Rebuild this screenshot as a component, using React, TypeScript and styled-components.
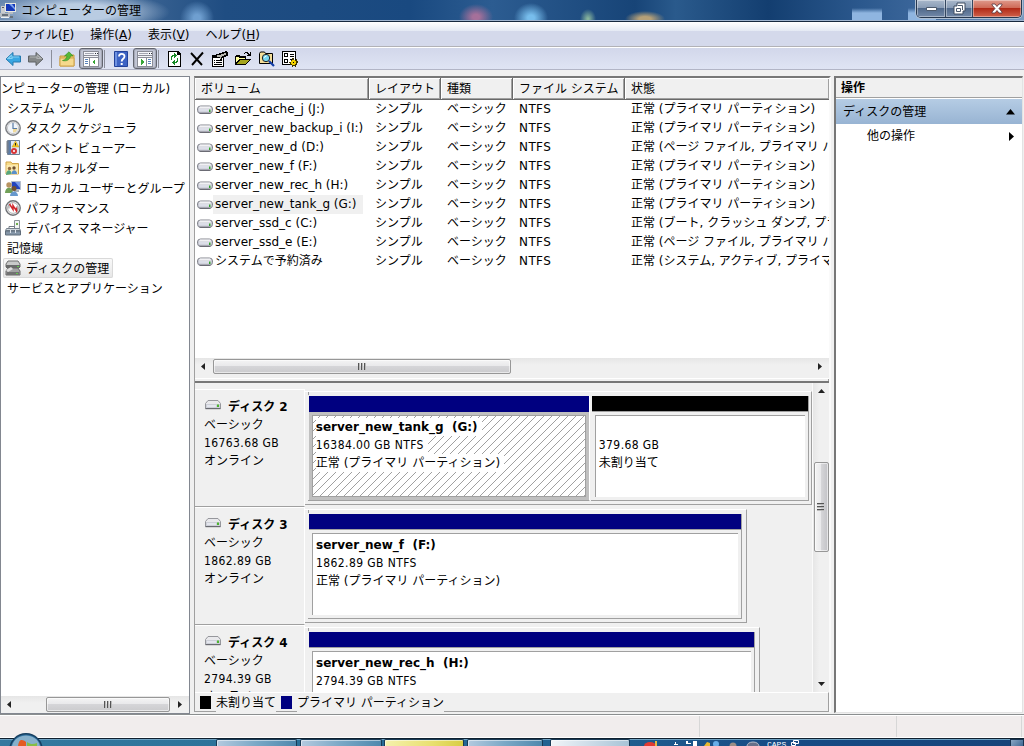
import type { ReactNode } from 'react';
import styled, { createGlobalStyle, css } from 'styled-components';

const volumes = [
  { name: 'server_cache_j (J:)', status: '正常 (プライマリ パーティション)' },
  { name: 'server_new_backup_i (I:)', status: '正常 (プライマリ パーティション)' },
  { name: 'server_new_d (D:)', status: '正常 (ページ ファイル, プライマリ パーティション)' },
  { name: 'server_new_f (F:)', status: '正常 (プライマリ パーティション)' },
  { name: 'server_new_rec_h (H:)', status: '正常 (プライマリ パーティション)' },
  { name: 'server_new_tank_g (G:)', status: '正常 (プライマリ パーティション)', selected: true },
  { name: 'server_ssd_c (C:)', status: '正常 (ブート, クラッシュ ダンプ, プライマリ パーティション)' },
  { name: 'server_ssd_e (E:)', status: '正常 (ページ ファイル, プライマリ パーティション)' },
  { name: 'システムで予約済み', status: '正常 (システム, アクティブ, プライマリ パーティション)' },
];

const disks = [
  {
    name: 'ディスク 2', size: '16763.68 GB', width: 504, parts: [
      { width: 280, title: 'server_new_tank_g  (G:)', size: '16384.00 GB NTFS', status: '正常 (プライマリ パーティション)', selected: true },
      { width: 216, title: '', size: '379.68 GB', status: '未割り当て', free: true },
    ],
  },
  {
    name: 'ディスク 3', size: '1862.89 GB', width: 438, parts: [
      { width: 432, title: 'server_new_f  (F:)', size: '1862.89 GB NTFS', status: '正常 (プライマリ パーティション)' },
    ],
  },
  {
    name: 'ディスク 4', size: '2794.39 GB', width: 451, parts: [
      { width: 445, title: 'server_new_rec_h  (H:)', size: '2794.39 GB NTFS', status: '正常 (プライマリ パーティション)' },
    ],
  },
] as {
  name: string; size: string; width: number;
  parts: { width: number; title: string; size: string; status: string; selected?: boolean; free?: boolean }[];
}[];

function Icon({ children, w = 16, h = 16, crisp }: { children: ReactNode; w?: number; h?: number; crisp?: boolean }) {
  return (
    <svg width={w} height={h} viewBox={`0 0 ${w} ${h}`} shapeRendering={crisp ? 'crispEdges' : undefined}>
      {children}
    </svg>
  );
}

const ComputerIcon = () => (
  <Icon>
    <path d="M5 0h11v9H5z" fill="#e8e8e0" />
    <path d="M6 1h9v7H6z" fill="#1438b8" />
    <path d="M9 1h3l3 4v2z" fill="#7ba2ee" />
    <path d="M1 3h4v7H1z" fill="#c9ccd0" />
    <path d="M2 4h2v1H2z" fill="#54585e" />
    <path d="M8 9h5v2H8zM0 10h10v4H0z" fill="#b7bcc2" />
    <path d="M2 11h6v2H2zM10 13h3v2h-3z" fill="#68727c" />
    <path d="M1 14h8v1H1z" fill="#eef2f5" />
  </Icon>
);

const ArrowIcon = ({ right }: { right?: boolean }) => (
  <Icon>
    <path
      d="M8 1.5 1 8l7 6.5V11h7.5V5H8z"
      transform={right ? 'translate(16 0) scale(-1 1)' : undefined}
      fill={right ? '#858889' : '#38a6e2'} stroke={right ? '#5e6264' : '#2579ae'} strokeLinejoin="round"
    />
    <path
      d="M7 4 3 7.5h4V6h7" transform={right ? 'translate(16 0) scale(-1 1)' : undefined}
      fill="none" stroke={right ? '#b0b3b4' : '#83d0f2'} strokeWidth="1.2"
    />
  </Icon>
);

const FolderUpIcon = () => (
  <Icon>
    <path d="M1 5h5l1-1h8v11H1z" fill="#efc567" stroke="#c89a3f" />
    <path d="M1 7h14v8H1z" fill="#f6d98d" stroke="#cfa24b" />
    <path d="M3.500 9.500C6 9 7.500 7.500 8 5H5.500L10 .8 14 5h-2.500c-.5 4-4 5.500-8 4.500z" fill="#57b836" stroke="#318b20" strokeWidth=".6" />
  </Icon>
);

const PaneIcon = ({ right }: { right?: boolean }) => (
  <Icon crisp>
    <path d="M0 0h16v16H0z" fill="#8b8d98" />
    <path d="M1 1h14v3H1zM1 5h14v1H1z" fill="#f4f5fa" />
    <path d="M2 2h9v1H2z" fill="#a4a6b2" />
    <path d="M12 2h1v1h-1zM14 2h1v1h-1z" fill="#30323c" />
    {right ? (
      <>
        <path d="M1 7h8v8H1zM10 7h5v8h-5z" fill="#fff" />
        <path d="M11 8h3v1h-3zM11 10h3v1h-3zM11 12h3v1h-3z" fill="#5b83bb" />
        <path d="m4 8 3 3-3 3z" fill="#37a537" />
      </>
    ) : (
      <>
        <path d="M1 7h5v8H1zM7 7h8v8H7z" fill="#fff" />
        <path d="M2 8h3v1H2zM2 10h3v1H2zM2 12h3v1H2z" fill="#5b83bb" />
        <path d="m12 8-3 3 3 3z" fill="#37a537" />
      </>
    )}
  </Icon>
);

const HelpIcon = () => (
  <Icon w={14}>
    <path d="M.5.5h13v15H.5z" fill="#3d63c4" stroke="#23429a" />
    <path d="M1 1h2v14H1z" fill="#6e91e0" />
    <path d="M5 5.5C5 2 10.500 2 10.500 5.300 10.500 8 7.700 7.500 7.700 10.500" fill="none" stroke="#fff" strokeWidth="1.8" />
    <path d="M6.700 12h2v2h-2z" fill="#fff" />
  </Icon>
);

const RefreshIcon = () => (
  <Icon w={13} crisp>
    <path d="M0 0h10l3 3v13H0z" fill="#000" />
    <path d="M1 1h8v3h3v11H1z" fill="#fff" />
    <path d="M6 2h1v1h1v1h1v1H8v1H7v1H6V5H5v1H4v3H3V5h1V4h2zM9 7h1v4H9v1H7v2H6v-1H5v-1H4v-1h1v-1h1V9h1v2h1v-1h1z" fill="#158a24" />
  </Icon>
);

const DeleteIcon = () => (
  <Icon w={14}>
    <path d="M1 2 12 14M13 1.500 2 14" fill="none" stroke="#000" strokeWidth="1.9" />
  </Icon>
);

const PropertiesIcon = () => (
  <Icon crisp>
    <path d="M0 4h12v12H0z" fill="#000" />
    <path d="M1 7h10v8H1z" fill="#fff" />
    <path d="M2 9h1v1H2zM4 9h6v1H4zM2 11h1v1H2zM4 11h6v1H4zM2 13h8v1H2z" fill="#000" />
    <path d="M4 3h3V2h3V1h3V0h2v1h1v4h-2v1h-2v1h-2v2H8V7H6V5H4z" fill="#000" />
    <path d="M5 4h4V3h3V2h2v2h-2v1h-2v1H9v2H8V6H5z" fill="#b8b8b0" />
  </Icon>
);

const OpenIcon = () => (
  <Icon crisp>
    <path d="M0 5h1V4h4v1h6v3h5v1h-1v1h-1v1h-1v1h-1v1h-1v1H0z" fill="#000" />
    <path d="M1 6h3v1h6v1H4v1H3v1H2v1H1z" fill="#ffff9c" />
    <path d="M5 9h9v1h-1v1h-1v1h-1v1H2v-1h1v-1h1v-1h1z" fill="#a5a51e" />
    <path d="M9 2h1V1h3v1h1v1h1V1h1v4h-4V4h1V3h-1V2h-2v1H9z" fill="#000" />
  </Icon>
);

const FindIcon = () => (
  <Icon>
    <path d="M.5 2.500 1.500 1h4l1 1.500h7v10H.5z" fill="#f5de98" stroke="#000" />
    <circle cx="7" cy="7" r="3.700" fill="#77d6f0" stroke="#222" />
    <path d="M5 6.500 7.500 5" stroke="#fff" />
    <path d="m10 10 5 5" stroke="#123da6" strokeWidth="2.200" />
  </Icon>
);

const SettingsIcon = () => (
  <Icon crisp>
    <path d="M0 0h14v14H0z" fill="#000" />
    <path d="M1 1h12v12H1z" fill="#fff" />
    <path d="M2 2h4v4H2zM8 3h4v1H8zM8 5h4v1H8zM2 8h4v4H2zM8 8h3v1H8z" fill="#000" />
    <path d="M3 3h2v2H3zM3 9h2v2H3z" fill="#fff" />
    <path d="M10 7h2v2h2V8h1v2h1v2h-1v2h-1v2h-1v-1h-2v1h-1v-2H8v-2H7v-1h2V9h1z" fill="#403700" />
    <path d="M10 9h3v1h1v3h-1v1h-3v-1H9v-3h1z" fill="#f1d000" />
    <path d="M11 11h1v1h-1z" fill="#000" />
  </Icon>
);

const DriveIcon = () => (
  <Icon h={9}>
    <rect x=".5" y="1" width="15" height="7.300" rx="3" fill="#c6c8d2" stroke="#85878f" />
    <path d="M3 1.500h10l1.500 2h-13z" fill="#f1f1f4" />
    <path d="M2 4h12v2.500H2z" fill="#dcdee8" />
    <path d="M2.500 8.300h11" stroke="#5f6068" />
    <path d="M12 4.500h1.500V7H12z" fill="#32a32b" />
  </Icon>
);

const DiskIcon = () => (
  <Icon h={10}>
    <path d="M3 .5h10l2.500 3v5h-15v-5z" fill="#e9e9ec" stroke="#96979c" />
    <path d="M1 4h14v4H1z" fill="#cdd0d8" />
    <path d="M2 5h9v2H2z" fill="#e4e6ee" />
    <path d="M.5 8.700h15" stroke="#5f6068" />
    <path d="M12 4.500h2V7h-2z" fill="#4cb52f" />
  </Icon>
);

const ClockIcon = () => (
  <Icon>
    <circle cx="8" cy="8" r="7.200" fill="#fafafa" stroke="#7d8085" strokeWidth="1.500" />
    <circle cx="8" cy="8" r="5.600" fill="#f1f5fa" stroke="#c8c9cc" />
    <path d="M8 8h4.500A4.500 4.500 0 0 1 8 12.500z" fill="#efd999" />
    <path d="M8 3v5.500h4" fill="none" stroke="#587ba5" strokeWidth="1.200" />
  </Icon>
);

const EventIcon = () => (
  <Icon>
    <path d="M2.500.5h12v14h-12z" fill="#dfe8f4" stroke="#6f8096" />
    <path d="M3 1h3v13H3z" fill="#5b7ca8" />
    <path d="M1 2h3M1 4h3M1 6h3M1 8h3M1 10h3M1 12h3" stroke="#7b7f85" />
    <path d="m10.500 1 3.500 6H7z" fill="#f5c820" stroke="#c79b13" strokeWidth=".5" />
    <path d="M10.500 3v2.500" stroke="#222" />
    <circle cx="9" cy="11" r="3" fill="#d83437" />
    <path d="m8 10 2 2m0-2-2 2" stroke="#fff" strokeWidth=".8" />
  </Icon>
);

const SharedIcon = () => (
  <Icon>
    <path d="M1 2h5l1 1.500h6.500V14H1z" fill="#f7dc8a" stroke="#d1a448" />
    <path d="M1.500 5h11.500v9H1.500z" fill="#fbe9ae" />
    <circle cx="4.500" cy="8.500" r="1.700" fill="#956b3d" />
    <circle cx="9" cy="8" r="1.700" fill="#6f5030" />
    <path d="M1 15c0-6 5.500-6 5.500-1z" fill="#55a67c" />
    <path d="M6.500 14c0-5 5.500-5 5.500 0z" fill="#5a8fca" />
  </Icon>
);

const UsersIcon = () => (
  <Icon>
    <path d="M6.500 1.500h9v8h-9z" fill="#2444bd" stroke="#b4bccb" />
    <path d="m10 2 5 6V2z" fill="#799ae6" />
    <path d="M9 10h5v2H9z" fill="#a9b0ba" />
    <circle cx="4" cy="5" r="2.700" fill="#b89361" />
    <path d="M0 13c0-7 8-7 8 0z" fill="#71a058" />
    <circle cx="9" cy="8.500" r="2.500" fill="#72502d" />
    <path d="M5 16c0-6 8-6 8 0z" fill="#6899cd" />
  </Icon>
);

const GaugeIcon = () => (
  <Icon>
    <circle cx="8" cy="8" r="7.200" fill="#f8f8f8" stroke="#6f7276" strokeWidth="1.400" />
    <circle cx="8" cy="8" r="5.400" fill="#fff" stroke="#b0b1b3" />
    <path d="M4 4.500v4M12 6v5" stroke="#777" strokeWidth=".8" />
    <path d="M4.500 4 8 9.500V5.500l3.500 5.500V7.500" fill="none" stroke="#d1262b" strokeWidth="1.500" />
  </Icon>
);

const DeviceIcon = () => (
  <Icon>
    <path d="M9.500.5h5v9h-5z" fill="#f1f3f4" stroke="#8b9299" />
    <path d="M11 3h2v2h-2z" fill="#70ae4e" />
    <path d="M4 6.500h5.500v3H4z" fill="none" stroke="#737b84" />
    <path d="M1.500 8.500h13l1 2H.5z" fill="#d1d8df" stroke="#77818d" />
    <path d="M.5 11h15v4H.5z" fill="#8495a7" stroke="#5f6c7a" />
    <path d="M5 10h1v3H5zM10 10h1v3h-1z" fill="#dfe5ec" />
  </Icon>
);

const DiskManagementIcon = () => (
  <Icon>
    <path d="M3 1h10l2 3v3H1V4z" fill="#c9caca" stroke="#707070" />
    <path d="M1 5h14v3H1z" fill="#6a6b6b" />
    <path d="M3 8h10l2 3v4H1v-4z" fill="#a2a3a4" stroke="#666" />
    <path d="M2 12h12v3H2z" fill="#717272" />
    <path d="M12 6h2v1h-2zM11 13h2v1h-2z" fill="#61ca4c" />
    <path d="m1 10 5-3 2 2-5 3z" fill="#dedede" />
  </Icon>
);

const toolbar = [
  { lead: 5, icon: <ArrowIcon /> },
  { lead: 7, icon: <ArrowIcon right /> },
  { lead: 7, icon: null },
  { lead: 7, icon: <FolderUpIcon /> },
  { lead: 4, icon: <PaneIcon />, pressed: true },
  { lead: 1, icon: null },
  { lead: 9, icon: <HelpIcon /> },
  { lead: 5, icon: <PaneIcon right />, pressed: true },
  { lead: 1, icon: null },
  { lead: 9, icon: <RefreshIcon /> },
  { lead: 9, icon: <DeleteIcon /> },
  { lead: 8, icon: <PropertiesIcon /> },
  { lead: 7, icon: <OpenIcon /> },
  { lead: 8, icon: <FindIcon /> },
  { lead: 7, icon: <SettingsIcon /> },
];

const tree = [
  { label: 'ンピューターの管理 (ローカル)', indent: 0 },
  { label: 'システム ツール', indent: 6 },
  { label: 'タスク スケジューラ', indent: 4, icon: <ClockIcon /> },
  { label: 'イベント ビューアー', indent: 4, icon: <EventIcon /> },
  { label: '共有フォルダー', indent: 4, icon: <SharedIcon /> },
  { label: 'ローカル ユーザーとグループ', indent: 4, icon: <UsersIcon /> },
  { label: 'パフォーマンス', indent: 4, icon: <GaugeIcon /> },
  { label: 'デバイス マネージャー', indent: 4, icon: <DeviceIcon /> },
  { label: '記憶域', indent: 6 },
  { label: 'ディスクの管理', indent: 4, icon: <DiskManagementIcon />, selected: true },
  { label: 'サービスとアプリケーション', indent: 6 },
];

const SmallArrow = ({ dir }: { dir: 'left' | 'right' | 'up' | 'down' }) => {
  const d = { left: 'M6 1v7L2 4.500z', right: 'M3 1v7l4-3.500z', up: 'M1 6h7L4.500 2z', down: 'M1 3h7L4.500 7z' };
  return <Icon w={9} h={9}><path d={d[dir]} fill="#222" /></Icon>;
};

export default function App() {
  return (
    <Window>
      <Global />
      <TitleBar>
        <ComputerIcon />
        <TitleText>コンピューターの管理</TitleText>
        <Controls>
          <Control $w={29}><Icon w={13} h={7}><path d="M1.500 2.500h10v3h-10z" fill="#fff" stroke="#4d5a6c" /></Icon></Control>
          <Control $w={27}>
            <Icon w={13} h={13}>
              <path d="M4 1h8v8h-2v3H1V4h3z" fill="#fff" stroke="#3f4c60" />
              <path d="M3.500 6.500h4v3h-4zM5 3.500h4.500V8" fill="none" stroke="#4d5b6e" />
            </Icon>
          </Control>
          <Control $w={48} $close>
            <Icon w={12} h={11}>
              <path d="M1 1h3l2 2.500L8 1h3v1L8 5.500 11 9v1H8L6 7.500 4 10H1V9l3-3.500L1 2z" fill="#fff" stroke="#55343c" strokeWidth=".8" />
            </Icon>
          </Control>
        </Controls>
      </TitleBar>
      <MenuBar>
        <span>ファイル(<u>F</u>)</span>
        <span>操作(<u>A</u>)</span>
        <span>表示(<u>V</u>)</span>
        <span>ヘルプ(<u>H</u>)</span>
      </MenuBar>
      <Toolbar>
        {toolbar.map((item, i) => (
          item.icon
            ? <Tool key={i} $lead={item.lead} $pressed={item.pressed}>{item.icon}</Tool>
            : <Separator key={i} $lead={item.lead} />
        ))}
      </Toolbar>

      <Body>
        <TreePane>
          <TreeList>
            {tree.map((item) => (
              <TreeItem key={item.label} $indent={item.indent}>
                <TreeLabel $selected={item.selected}>{item.icon}<span>{item.label}</span></TreeLabel>
              </TreeItem>
            ))}
          </TreeList>
          <HScroll>
            <SmallArrow dir="left" />
            <HTrack><HThumb $start={28} $w={124}>{grip}</HThumb></HTrack>
            <SmallArrow dir="right" />
          </HScroll>
        </TreePane>

        <Center>
          <VolumeHead>
            <HeadCell>ボリューム</HeadCell>
            <HeadCell>レイアウト</HeadCell>
            <HeadCell>種類</HeadCell>
            <HeadCell>ファイル システム</HeadCell>
            <HeadCell>状態</HeadCell>
          </VolumeHead>
          <VolumeList>
            {volumes.map((v) => (
              <VolumeRow key={v.name}>
                <VolumeName $selected={v.selected}><DriveIcon /><span>{v.name}</span></VolumeName>
                <span>シンプル</span>
                <span>ベーシック</span>
                <FileSystem>NTFS</FileSystem>
                <span>{v.status}</span>
              </VolumeRow>
            ))}
          </VolumeList>
          <HScroll>
            <SmallArrow dir="left" />
            <HTrack><HThumb $start={1} $w={298}>{grip}</HThumb></HTrack>
            <SmallArrow dir="right" />
          </HScroll>
          <Splitter />
          <DiskArea>
            <DiskList>
              {disks.map((d) => (
                <DiskRow key={d.name}>
                  <DiskInfo>
                    <DiskTitle><DiskIcon />{d.name}</DiskTitle>
                    <div>ベーシック</div>
                    <Size>{d.size}</Size>
                    <div>オンライン</div>
                  </DiskInfo>
                  <DiskFrame $w={d.width}>
                    {d.parts.map((p) => (
                      <Partition key={p.size} $w={p.width} $selected={p.selected}>
                        <Bar $free={p.free} />
                        <PartBox $selected={p.selected}>
                          <PartText $bold>{p.title}</PartText>
                          <PartText><Size>{p.size}</Size></PartText>
                          <PartText>{p.status}</PartText>
                        </PartBox>
                      </Partition>
                    ))}
                  </DiskFrame>
                </DiskRow>
              ))}
            </DiskList>
            <VScroll>
              <SmallArrow dir="up" />
              <VTrack><VThumb><Icon w={8} h={9} crisp><path d="M0 0h7v1H0zM0 3h7v1H0zM0 6h7v1H0z" fill="#555" /><path d="M0 1h7v1H0zM0 4h7v1H0zM0 7h7v1H0z" fill="#bbb" /></Icon></VThumb></VTrack>
              <SmallArrow dir="down" />
            </VScroll>
          </DiskArea>
          <Legend>
            <Swatch $color="#000" />
            <LegendText>未割り当て</LegendText>
            <Swatch $color="#000080" />
            <LegendText>プライマリ パーティション</LegendText>
          </Legend>
        </Center>

        <ActionPane>
          <ActionHead>操作</ActionHead>
          <ActionGroup>
            ディスクの管理
            <Icon w={11} h={6}><path d="M1 5.500h9L5.500 0z" /></Icon>
          </ActionGroup>
          <ActionItem>
            他の操作
            <Icon w={6} h={9}><path d="M0 0v9l5-4.500z" /></Icon>
          </ActionItem>
        </ActionPane>
      </Body>

      <StatusBar>
        <StatusCell $w={699} />
        <StatusCell $w={197} />
        <StatusCell $w={125} />
      </StatusBar>
      <TaskBar>
        <Task $w={81} />
        <Task $w={82} $lead={3} />
        <Task $w={80} $lead={2} $tone="yellow" />
        <Task $w={76} $lead={3} />
        <Task $w={80} $lead={7} $tone="light" />
        <Tray>
          <Icon w={104} h={6}>
            <ellipse cx="8" cy="6" rx="6" ry="4" fill="#e23a32" />
            <path d="M13 1h2v5h-2z" fill="#e6ba45" />
            <path d="M33 2h1v2h2v1h-4V4h1zM44 1h2v2h3v1h-5zM51 1h4v5h-4z" fill="#fff" />
            <path d="m62 6 3-4 3 1v3z" fill="#e8b830" />
            <circle cx="74" cy="4" r="3" fill="#67aee9" />
            <circle cx="91" cy="6" r="3.500" fill="#9a8d86" />
          </Icon>
          <Icon w={18} h={6}><ellipse cx="7" cy="6" rx="6" ry="4" fill="#66708a" stroke="#b9bfcd" /></Icon>
          <Caps>CAPS</Caps>
          <Icon w={10} h={6}><path d="M3.500.5h5v3h-5zM1.500 2.500h4v3h-4z" fill="none" stroke="#fff" /></Icon>
        </Tray>
        <ShowDesktop />
      </TaskBar>
      <StartOrb>
        <svg width="34" height="13" viewBox="0 0 34 13">
          <circle cx="17" cy="17" r="16.200" fill="#2e6f9d" stroke="#173f61" strokeWidth="1.400" />
          <path d="M3 13C6-1 28-1 31 13z" fill="#a6c6db" opacity=".75" />
          <path d="M9 13c1-7 4-7 8-4v4z" fill="#e45a21" />
          <path d="M18 9c4 3 7 2 10 1v3H18z" fill="#86bd45" />
        </svg>
      </StartOrb>
    </Window>
  );
}

const grip = (
  <Icon w={9} h={8} crisp>
    <path d="M0 0h1v7H0zM3 0h1v7H3zM6 0h1v7H6z" fill="#555" />
    <path d="M1 0h1v7H1zM4 0h1v7H4zM7 0h1v7H7z" fill="#bbb" />
  </Icon>
);

const Global = createGlobalStyle`
  body {
    margin: 0;
    overflow: hidden;
  }

  * {
    box-sizing: border-box;
  }

  svg {
    display: block;
    flex: none;
  }
`;

const Window = styled.div`
  position: relative;
  display: flex;
  flex-direction: column;
  width: 1024px;
  height: 746px;
  overflow: hidden;
  background: #f0f0f0;
  color: #000;
  font: 12px/18px "DejaVu Sans", "Noto Sans CJK JP", sans-serif;
  white-space: pre;
`;

/* ~~~ title, menu and tool bars ~~~ */
const TitleBar = styled.div`
  display: flex;
  align-items: flex-start;
  flex: none;
  height: 22px;
  padding-top: 3px;
  border-bottom: 1px solid #16283f;
  box-shadow: inset 0 -1px #9fb4cf;
  background:
    radial-gradient(ellipse 90px 20px at 80px 12px, #b9cce2 0 40%, transparent 100%),
    radial-gradient(circle 17px at 197px 18px, #6f9fd0 0 20%, transparent 100%),
    radial-gradient(ellipse 17px 13px at 476px 17px, #a5709a 0 20%, transparent 100%),
    radial-gradient(ellipse 17px 15px at 531px 18px, #77bdec 0 20%, transparent 100%),
    radial-gradient(ellipse 8px 10px at 588px 19px, #86b39c 0 10%, transparent 100%),
    radial-gradient(ellipse 20px 8px at 645px 19px, #b5a078 0 30%, transparent 100%),
    linear-gradient(transparent, #8fb5e0 5px) 852px 8px / 30px 14px no-repeat,
    linear-gradient(transparent, #8fb5e0 5px) 908px 8px / 28px 14px no-repeat,
    linear-gradient(90deg, #6787ad 0, #1f4d82 22%, #194980 40%, #2c5c91 48%, #174477 62%, #2a5a8c 66%, #133e70 75%, #2b588d 84%, #3c679b 90%, #7a9bc2);
`;

const TitleText = styled.div`
  flex: 1;
  padding-left: 5px;
  line-height: 16px;
`;

const Controls = styled.div`
  display: flex;
  height: 18px;
  margin: -3px 2px 0 0;
  border: 1px solid #27384f;
  border-top: 0;
  border-radius: 0 0 5px 5px;
  overflow: hidden;
  box-shadow: 0 0 0 1px #aebfd3;
`;

const Control = styled.div<{ $w: number; $close?: boolean }>`
  display: flex;
  align-items: center;
  justify-content: center;
  width: ${({ $w }) => $w}px;
  border-right: 1px solid #33465f;
  box-shadow: inset 0 0 0 1px #ffffff60;
  background: ${({ $close }) => $close
    ? 'linear-gradient(#df9a8c, #cf6b58 45%, #b12a17 50%, #d0624b)'
    : 'linear-gradient(#a9b8cb, #8a9db6 45%, #50698b 50%, #7389a8)'};

  &:last-child {
    border-right: 0;
  }
`;

const MenuBar = styled.div`
  display: flex;
  flex: none;
  gap: 16px;
  height: 26px;
  padding: 4px 10px 0;
  border-bottom: 1px solid #fff;
  box-shadow: inset 0 -1px #b2b2b6;
  background: linear-gradient(#fff, #e4e9f4 9px, #d4d9eb 9px);

  u {
    text-underline-offset: 1px;
  }
`;

const Toolbar = styled.div`
  display: flex;
  align-items: center;
  flex: none;
  height: 22px;
  border-bottom: 1px solid #b2b5c6;
  background: linear-gradient(#d2d7ea, #dfe4f4);
`;

const Tool = styled.div<{ $lead: number; $pressed?: boolean }>`
  margin-left: ${({ $lead }) => $lead}px;

  ${({ $pressed }) => $pressed && css`
    display: flex;
    align-items: center;
    justify-content: center;
    width: 24px;
    height: 21px;
    border: 1px solid #62656f;
    border-radius: 3px;
    background: #c3c7d6;
    box-shadow: inset 0 0 1px 1px #a3a6b4;
  `}
`;

const Separator = styled.div<{ $lead: number }>`
  width: 1px;
  height: 18px;
  margin-left: ${({ $lead }) => $lead}px;
  background: #8b8e9a;
`;

const Body = styled.div`
  display: flex;
  flex: none;
  height: 645px;
  padding-top: 6px;
  border-bottom: 1px solid #8b8e8f;
`;

/* ~~~ scroll bars ~~~ */
const HScroll = styled.div`
  display: flex;
  align-items: center;
  flex: none;
  height: 17px;
  padding: 0 5px 0 4px;
  background: linear-gradient(#e6e6e6, #f0f0f0 40%);
`;

const HTrack = styled.div`
  flex: 1;
  padding: 0 4px;
`;

const HThumb = styled.div<{ $start: number; $w: number }>`
  display: flex;
  align-items: center;
  justify-content: center;
  width: ${({ $w }) => $w}px;
  height: 15px;
  margin-left: ${({ $start }) => $start}px;
  border: 1px solid #979797;
  border-radius: 2px;
  background: linear-gradient(#f4f4f4, #e9e9eb 45%, #d5d5d8 50%, #cbcbcd);
  box-shadow: inset 0 0 0 1px #ffffff90;
`;

const VScroll = styled.div`
  display: flex;
  flex-direction: column;
  align-items: center;
  width: 17px;
  padding: 4px 0;
  border-left: 1px solid #fafafa;
  background: linear-gradient(90deg, #e6e6e6, #f0f0f0 40%);
`;

const VTrack = styled.div`
  flex: 1;
  padding-top: 66px;
`;

const VThumb = styled.div`
  display: flex;
  align-items: center;
  justify-content: center;
  width: 15px;
  height: 90px;
  border: 1px solid #979797;
  border-radius: 2px;
  background: linear-gradient(90deg, #f4f4f4, #e9e9eb 45%, #d5d5d8 50%, #c2c2c6);
  box-shadow: inset 0 0 0 1px #ffffff90;
`;

/* ~~~ tree ~~~ */
const TreePane = styled.div`
  display: flex;
  flex-direction: column;
  width: 190px;
  border: 1px solid #828790;
  background: #fff;
`;

const TreeList = styled.div`
  flex: 1;
  padding-top: 1px;
  overflow: hidden;
`;

const TreeItem = styled.div<{ $indent: number }>`
  display: flex;
  height: 20px;
  padding-left: ${({ $indent }) => $indent}px;
`;

const TreeLabel = styled.div<{ $selected?: boolean }>`
  display: flex;
  align-items: center;
  gap: 5px;
  height: 20px;
  padding-right: 4px;

  span {
    padding-top: 2px;
  }

  ${({ $selected }) => $selected && css`
    margin-left: -2px;
    padding-left: 2px;
    border-radius: 2px;
    background: linear-gradient(#fafafa, #e6e6e6);
    box-shadow: inset 0 0 0 1px #d9d9d9;
  `}
`;

/* ~~~ volume list ~~~ */
const Center = styled.div`
  display: flex;
  flex-direction: column;
  width: 637px;
  height: 636px;
  margin: 0 3px 0 4px;
  border: 1px solid #a0a0a0;
  border-top: 2px solid #777;
  border-right: 2px solid #fafafa;
  border-bottom: 0;
  background: #fff;
`;

const columns = css`
  display: grid;
  grid-template-columns: 174px 72px 72px 112px 1fr;
`;

const VolumeHead = styled.div`
  ${columns}
  flex: none;
  height: 22px;
  border-bottom: 1px solid #696969;
  background: #f0f0f0;
`;

const HeadCell = styled.div`
  padding-left: 6px;
  line-height: 22px;
  border-right: 1px solid #696969;
  box-shadow: inset 1px 1px #fff, inset -1px -1px #a0a0a0;
  overflow: hidden;

  &:last-child {
    border-right: 0;
  }
`;

const VolumeList = styled.div`
  flex: 1;
  overflow: hidden;
`;

const VolumeRow = styled.div`
  ${columns}
  height: 19px;
  line-height: 19px;

  > span {
    padding-left: 6px;
    overflow: hidden;
  }
`;

const FileSystem = styled.span`
  letter-spacing: .4px;
`;

const VolumeName = styled.div<{ $selected?: boolean }>`
  display: flex;
  align-items: center;
  padding-left: 2px;

  span {
    padding: 0 6px 0 2px;
    background: ${({ $selected }) => ($selected ? '#f0f0f0' : 'transparent')};
  }
`;

const Splitter = styled.div`
  flex: none;
  height: 8px;
  border-top: 3px solid #f0f0f0;
  border-bottom: 2px solid #777;
  background: #f0f0f0;
  box-shadow: inset 0 1px #fff, inset -1px 0 #a0a0a0;
`;

/* ~~~ disk map ~~~ */
const DiskArea = styled.div`
  display: flex;
  flex: none;
  height: 309px;
  overflow: hidden;
  background: #f0f0f0;
`;

const DiskList = styled.div`
  flex: 1;
  padding-top: 6px;
  overflow: hidden;
`;

const DiskRow = styled.div`
  display: flex;
  align-items: flex-start;
  height: 118px;
`;

const DiskInfo = styled.div`
  width: 110px;
  height: 118px;
  padding: 8px 0 0 9px;
  border-top: 1px solid #fff;
  border-right: 1px solid #fff;
  border-bottom: 1px solid #a0a0a0;
`;

const DiskTitle = styled.div`
  display: flex;
  gap: 7px;
  height: 18px;
  padding: 1px 0 0 1px;
  font-weight: bold;
  line-height: 17px;

  svg {
    margin-top: 1px;
  }
`;

const Size = styled.div`
  font-family: "DejaVu Sans Condensed", "DejaVu Sans", sans-serif;
  letter-spacing: .4px;
`;

const DiskFrame = styled.div<{ $w: number }>`
  display: flex;
  width: ${({ $w }) => $w + 4}px;
  height: 114px;
  margin-top: 2px;
  padding: 4px 0 0 3px;
  border-top: 1px solid #fff;
  border-right: 1px solid #a0a0a0;
  border-bottom: 1px solid #a0a0a0;
  background: linear-gradient(#a0a0a0, #a0a0a0) 3px 0 / 1px 3px no-repeat;
`;

const Partition = styled.div<{ $w: number; $selected?: boolean }>`
  flex: none;
  width: ${({ $w }) => $w + 2}px;
  height: 105px;
  padding-left: 1px;
  margin-right: ${({ $selected }) => ($selected ? 1 : 0)}px;
  border-right: 1px solid ${({ $selected }) => ($selected ? '#fff' : '#a0a0a0')};
  border-bottom: 1px solid #a0a0a0;
`;

const Bar = styled.div<{ $free?: boolean }>`
  height: 16px;
  background: ${({ $free }) => ($free ? '#000' : '#000080')};
`;

const PartBox = styled.div<{ $selected?: boolean }>`
  height: 88px;
  padding: 3px 0 0 4px;
  border: 3px solid ${({ $selected }) => ($selected ? '#c0c0c0' : '#f0f0f0')};
  background: #fff;
  box-shadow: inset 1px 1px #a0a0a0, 0 -1px #a0a0a0;

  ${({ $selected }) => $selected && css`
    outline: 1px solid #a0a0a0;
    outline-offset: -4px;
    background: repeating-linear-gradient(135deg, #a0a0a0 0 .8px, #fff 1px 5.657px);
    box-shadow: none;
  `}
`;

const PartText = styled.div<{ $bold?: boolean }>`
  width: fit-content;
  height: 18px;
  padding-right: 4px;
  background: #fff;
  font-weight: ${({ $bold }) => ($bold ? 'bold' : 'normal')};
`;

const Legend = styled.div`
  display: flex;
  align-items: center;
  flex: none;
  height: 20px;
  padding-left: 5px;
  border-top: 1px solid #fff;
  border-right: 1px solid #a0a0a0;
  border-bottom: 1px solid #a0a0a0;
  background: #f0f0f0;
`;

const Swatch = styled.div<{ $color: string }>`
  width: 11px;
  height: 13px;
  margin-right: 5px;
  background: ${({ $color }) => $color};
`;

const LegendText = styled.div`
  align-self: flex-start;
  height: 19px;
  margin-right: 5px;
  padding-top: 1px;
  background: #f0f0f0;
`;

/* ~~~ actions ~~~ */
const ActionPane = styled.div`
  flex: 1;
  height: 637px;
  margin-right: 1px;
  border: 1px solid #a0a0a0;
  border-top: 2px solid #777;
  border-left: 2px solid #777;
  border-right-color: #e3e3e3;
  border-bottom-color: #e3e3e3;
  background: #fff;
`;

const ActionHead = styled.div`
  height: 20px;
  padding-left: 5px;
  line-height: 21px;
  font-weight: bold;
  border-bottom: 1px solid #a0a0a0;
  background: #f0f0f0;
`;

const ActionGroup = styled.div`
  display: flex;
  align-items: center;
  justify-content: space-between;
  height: 25px;
  margin-top: 1px;
  padding: 0 6px 0 7px;
  background: linear-gradient(#b5cce4, #98b4d3);
`;

const ActionItem = styled.div`
  display: flex;
  align-items: center;
  justify-content: space-between;
  height: 24px;
  padding: 0 7px 0 31px;
`;

/* ~~~ status bar and task bar ~~~ */
const StatusBar = styled.div`
  display: flex;
  flex: none;
  height: 23px;
  padding: 0 0 1px 1px;
  border-top: 1px solid #fff;
  background: #f1eded;
  box-shadow: inset 0 -1px #fff;
`;

const StatusCell = styled.div<{ $w: number }>`
  width: ${({ $w }) => $w}px;
  border-right: 1px solid #d7d7d7;
`;

const TaskBar = styled.div`
  display: flex;
  flex: none;
  height: 8px;
  padding-left: 216px;
  border-top: 1px solid #10202f;
  background: linear-gradient(90deg, #35799f, #2b7299 25%, #205e8f 60%, #174c86 75%, #174379);
  box-shadow: inset 0 1px #70a3c3;
`;

const tones = {
  blue: 'linear-gradient(100deg, #b4cadf, #7aa8c6 50%, #4e88ad)',
  yellow: 'linear-gradient(100deg, #f5f1ae, #e9e070 60%, #d8cd43)',
  light: 'linear-gradient(100deg, #f1f5f8, #cddce8 50%, #a7c3d6)',
};

const Task = styled.div<{ $w: number; $lead?: number; $tone?: keyof typeof tones }>`
  flex: none;
  width: ${({ $w }) => $w}px;
  margin-left: ${({ $lead = 0 }) => $lead}px;
  border: 1px solid #183a55;
  border-bottom: 0;
  border-radius: 2px 2px 0 0;
  background: ${({ $tone = 'blue' }) => tones[$tone]};
  box-shadow: inset 1px 1px #ffffff80;
`;

const Tray = styled.div`
  display: flex;
  flex: 1;
  height: 7px;
  padding: 1px 0 0 12px;
  overflow: hidden;
`;

const Caps = styled.div`
  width: 26px;
  padding-left: 3px;
  color: #fff;
  font: 8px/10px "Liberation Mono", monospace;
`;

const ShowDesktop = styled.div`
  width: 14px;
  border: 1px solid #16324f;
  border-bottom: 0;
  background: linear-gradient(135deg, #8aa7c4, #3f6894);
`;

/* the orb rises above the edge of the task bar */
const StartOrb = styled.div`
  position: absolute;
  left: 9px;
  bottom: 0;
`;
